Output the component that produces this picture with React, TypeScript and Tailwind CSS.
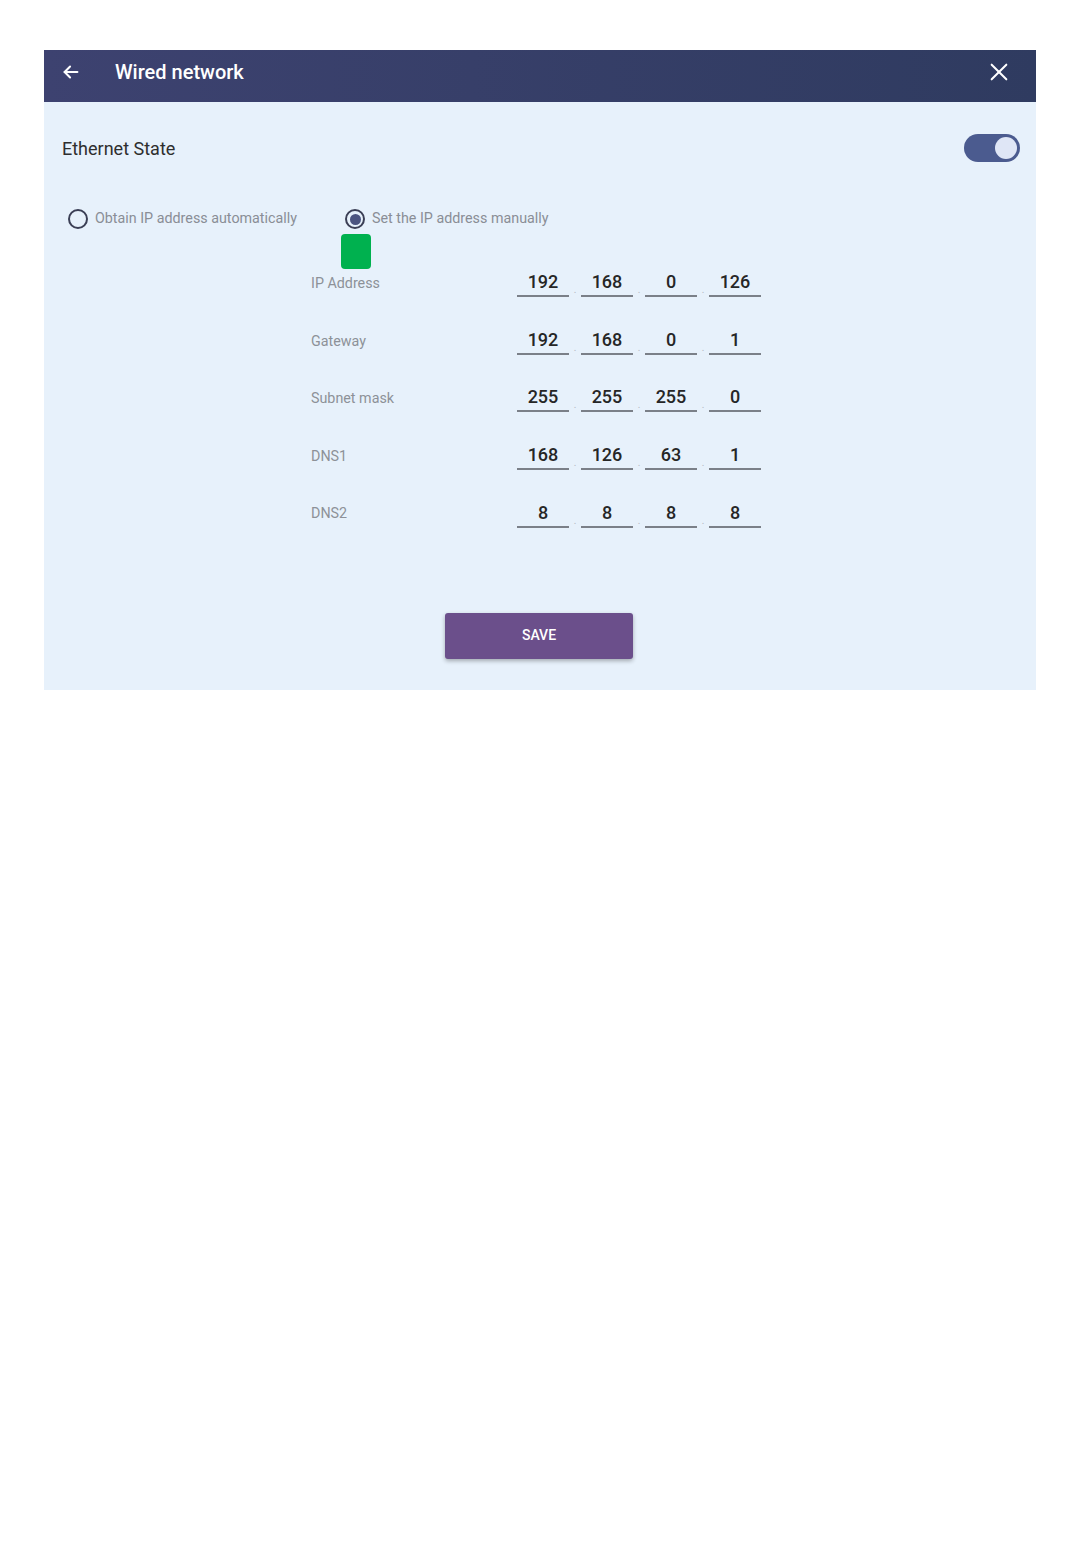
import React from "react";

const rows: [string, string[]][] = [
  ["IP Address", ["192", "168", "0", "126"]],
  ["Gateway", ["192", "168", "0", "1"]],
  ["Subnet mask", ["255", "255", "255", "0"]],
  ["DNS1", ["168", "126", "63", "1"]],
  ["DNS2", ["8", "8", "8", "8"]],
];

export default function App() {
  return (
    <div className="min-h-[1560px] w-[1080px] bg-white pt-[50px] pl-[44px]" style={{ fontFamily: "Roboto, 'Liberation Sans', sans-serif" }}>
      <div className="w-[992px] bg-[#e7f1fb]">
        <div className="flex h-[52px] items-center bg-gradient-to-r from-[#3d4270] to-[#2f3b60] pb-[8px] pl-[16px] pr-[26px]">
          <svg width="22" height="22" viewBox="0 0 24 24" fill="none" stroke="#ffffff" strokeWidth="2.2" strokeLinecap="round" strokeLinejoin="round">
            <path d="M19 12H5" />
            <path d="M11 6l-6 6 6 6" />
          </svg>
          <div className="ml-[33px] text-[20px] font-medium text-white">Wired network</div>
          <div className="flex-1" />
          <svg width="22" height="22" viewBox="0 0 24 24" fill="none" stroke="#ffffff" strokeWidth="2.2" strokeLinecap="round">
            <path d="M4 4l16 16" />
            <path d="M20 4L4 20" />
          </svg>
        </div>
        <div className="flex h-[92px] items-center pl-[18px] pr-[16px]">
          <div className="text-[18px] text-[#2e2e2e]">Ethernet State</div>
          <div className="flex-1" />
          <div className="flex h-[28px] w-[56px] items-center justify-end rounded-full bg-[#4b5b8f] pr-[3px]">
            <div className="h-[22px] w-[22px] rounded-full bg-[#dfe6f6]" />
          </div>
        </div>
        <div className="flex h-[50px] items-center pl-[24px]">
          <div className="flex items-center gap-[7px]">
            <div className="h-[20px] w-[20px] rounded-full border-[2px] border-[#3b3f55]" />
            <span className="text-[14.3px] text-[#8a8e96]">Obtain IP address automatically</span>
          </div>
          <div className="ml-[48px] flex items-center gap-[7px]">
            <div className="flex h-[20px] w-[20px] items-center justify-center rounded-full border-[2px] border-[#3b3f55]">
              <div className="h-[11px] w-[11px] rounded-full bg-[#4b5480]" />
            </div>
            <span className="text-[14.3px] text-[#8a8e96]">Set the IP address manually</span>
          </div>
        </div>
        <div className="relative">
          <div className="absolute left-[297px] top-[-10px] h-[35px] w-[30px] rounded-[4px] bg-[#00b14f]" />
          <div className="flex flex-col pt-[11px]">
            {rows.map(([label, vals]) => (
              <div key={label} className="flex h-[57.6px] items-center pl-[267px]">
                <div className="w-[206px] text-[14.3px] text-[#8d9198]">{label}</div>
                <div className="flex items-end">
                  {vals.map((v, i) => (
                    <React.Fragment key={i}>
                      {i > 0 && <div className="w-[12px] pb-[2px] text-center text-[10px] leading-none text-[#b5bac2]">.</div>}
                      <div className="w-[52px] border-b-[2px] border-[#7b8088] pb-[1px] text-center text-[18px] font-medium leading-[24px] text-[#262626]">{v}</div>
                    </React.Fragment>
                  ))}
                </div>
              </div>
            ))}
          </div>
        </div>
        <div className="flex justify-center pt-[70px] pb-[31px]">
          <div className="ml-[-2px] flex h-[46px] w-[188px] items-center justify-center rounded-[3px] bg-[#6b4f8b] text-[14px] font-medium text-white shadow-[0_2px_4px_rgba(0,0,0,0.3)]">
            SAVE
          </div>
        </div>
      </div>
    </div>
  );
}
